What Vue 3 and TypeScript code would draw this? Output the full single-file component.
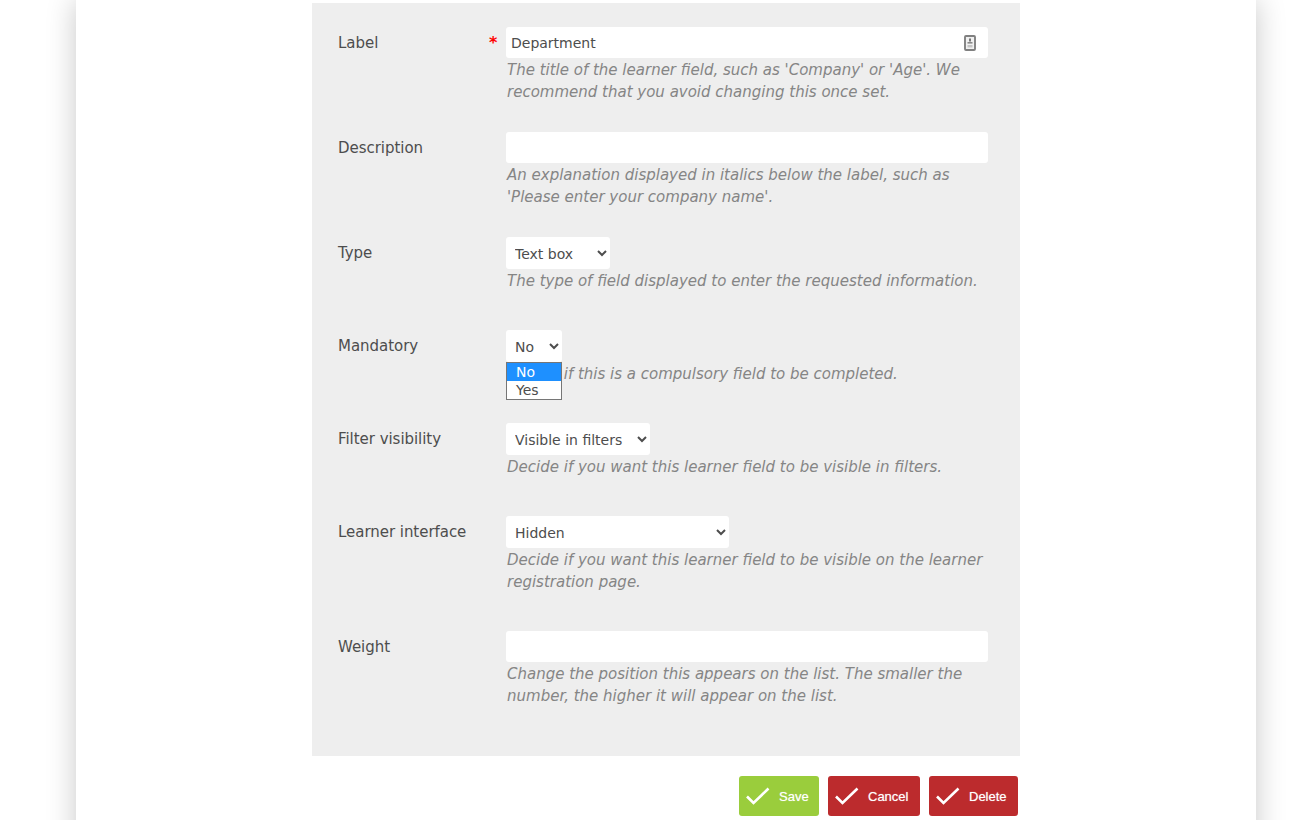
<script setup lang="ts">
interface Field {
  label: string
  hint: string
  required?: boolean
  kind: 'input' | 'select'
  value?: string
  options?: string[]
  size?: string
  icon?: boolean
  open?: boolean
}

const fields: Field[] = [
  { label: 'Label', required: true, kind: 'input', value: 'Department', icon: true, hint: "The title of the learner field, such as 'Company' or 'Age'. We recommend that you avoid changing this once set." },
  { label: 'Description', kind: 'input', value: '', hint: "An explanation displayed in italics below the label, such as 'Please enter your company name'." },
  { label: 'Type', kind: 'select', options: ['Text box'], size: 'w-type', hint: 'The type of field displayed to enter the requested information.' },
  { label: 'Mandatory', kind: 'select', options: ['No', 'Yes'], size: 'w-mand', open: true, hint: 'Decide if this is a compulsory field to be completed.' },
  { label: 'Filter visibility', kind: 'select', options: ['Visible in filters'], size: 'w-filter', hint: 'Decide if you want this learner field to be visible in filters.' },
  { label: 'Learner interface', kind: 'select', options: ['Hidden'], size: 'w-learner', hint: 'Decide if you want this learner field to be visible on the learner registration page.' },
  { label: 'Weight', kind: 'input', value: '', hint: 'Change the position this appears on the list. The smaller the number, the higher it will appear on the list.' },
]

const buttons = [
  { text: 'Save', cls: 'save' },
  { text: 'Cancel', cls: 'cancel' },
  { text: 'Delete', cls: 'delete' },
]
</script>

<template>
  <div class="page">
    <main class="card">
      <form class="panel" @submit.prevent>
        <div
          v-for="f in fields"
          :key="f.label"
          class="row"
          :class="f.kind === 'select' ? 'row-select' : 'row-input'"
        >
          <label class="label">{{ f.label }}</label>
          <span class="req">{{ f.required ? '*' : '' }}</span>
          <div class="control">
            <div v-if="f.kind === 'input'" class="input-wrap">
              <input class="input" type="text" :value="f.value" />
              <svg v-if="f.icon" class="contact" width="12" height="16" viewBox="0 0 12 16" aria-hidden="true">
                <rect x="1" y="1" width="10" height="14" rx="1" fill="#f0f0f0" stroke="#808080" stroke-width="1.9" />
                <rect x="5" y="3.5" width="2" height="3" fill="#777" />
                <rect x="3.5" y="7" width="5" height="1.6" fill="#888" />
                <rect x="3.5" y="10" width="5" height="2.4" fill="#c4c4c4" />
              </svg>
            </div>
            <div v-else class="select-wrap">
              <select class="select" :class="f.size">
                <option v-for="o in f.options" :key="o">{{ o }}</option>
              </select>
              <ul v-if="f.open" class="dropdown">
                <li class="active">No</li>
                <li>Yes</li>
              </ul>
            </div>
            <p class="hint">{{ f.hint }}</p>
          </div>
        </div>
      </form>
      <div class="actions">
        <button v-for="b in buttons" :key="b.text" type="button" class="btn" :class="b.cls">
          <svg class="tick" width="24" height="18" viewBox="0 0 24 18" aria-hidden="true">
            <path d="M1 9.5 L7.5 16 L22.5 1.5" fill="none" stroke="#fff" stroke-width="2.6" />
          </svg>
          <span>{{ b.text }}</span>
        </button>
      </div>
    </main>
  </div>
</template>

<style scoped>
.page {
  height: 820px;
  overflow: hidden;
  padding: 0 34px 0 76px;
  box-sizing: border-box;
  background: #fff;
  font-family: "DejaVu Sans", Verdana, sans-serif;
}
.card {
  width: 1180px;
  height: 900px;
  box-sizing: border-box;
  padding: 3px 236px 0;
  background: #fff;
  box-shadow: 0 0 28px rgba(0, 0, 0, 0.22);
}
.panel {
  box-sizing: border-box;
  width: 708px;
  height: 753px;
  padding: 24px 32px 0 26px;
  background: #eeeeee;
}
.row {
  display: flex;
  align-items: flex-start;
}
.row-input {
  padding-bottom: 29px;
}
.row-input .hint {
  margin-top: 1px;
}
.row-select {
  padding-bottom: 38px;
}
.label {
  width: 150px;
  padding-top: 6px;
  font-size: 15px;
  line-height: 20px;
  letter-spacing: -0.04px;
  color: #4d4d4d;
}
.req {
  width: 18px;
  padding-top: 6px;
  padding-left: 1px;
  box-sizing: border-box;
  font-size: 16px;
  line-height: 20px;
  font-weight: 700;
  color: #f00;
}
.control {
  width: 482px;
}
.input-wrap {
  position: relative;
  height: 31px;
}
.input {
  display: block;
  box-sizing: border-box;
  width: 100%;
  height: 31px;
  padding: 0 5px;
  border: 0;
  border-radius: 3px;
  background: #fff;
  font: 14px "DejaVu Sans", Verdana, sans-serif;
  color: #4d4d4d;
  outline: none;
}
.contact {
  position: absolute;
  top: 8px;
  right: 12px;
}
.select-wrap {
  position: relative;
  height: 33px;
}
.select {
  display: block;
  box-sizing: border-box;
  height: 32px;
  padding: 2px 5px 0;
  border: 0;
  border-radius: 3px;
  background: #fff;
  font: 14px "DejaVu Sans", Verdana, sans-serif;
  color: #4d4d4d;
}
.w-type { width: 104px; }
.w-mand { width: 56px; }
.w-filter { width: 144px; }
.w-learner { width: 223px; }
.dropdown {
  position: absolute;
  top: 32px;
  left: 0;
  z-index: 2;
  box-sizing: border-box;
  width: 56px;
  margin: 0;
  padding: 0;
  list-style: none;
  border: 1px solid #767676;
  background: #fff;
  font-size: 14px;
  line-height: 18px;
  color: #4d4d4d;
}
.dropdown li {
  height: 18px;
  padding-left: 9px;
}
.dropdown .active {
  background: #1e90ff;
  color: #fff;
}
.hint {
  margin: 0;
  padding-left: 1px;
  font-size: 15px;
  line-height: 22px;
  font-style: italic;
  color: #858585;
}
.actions {
  display: flex;
  justify-content: flex-end;
  gap: 9px;
  width: 706px;
  margin-top: 20px;
}
.btn {
  display: flex;
  align-items: center;
  height: 40px;
  padding: 0 0 0 7px;
  border: 0;
  border-radius: 3px;
  font: 400 13px "Liberation Sans", Arial, sans-serif;
  color: #fff;
  text-shadow: 0 0 1px rgba(255, 255, 255, 0.6);
}
.btn span {
  margin-left: 9px;
}
.save {
  width: 80px;
  background: #9acd3c;
}
.cancel {
  width: 92px;
  background: #bc2b2d;
}
.delete {
  width: 89px;
  background: #bc2b2d;
}
.tick {
  flex: none;
}
</style>
